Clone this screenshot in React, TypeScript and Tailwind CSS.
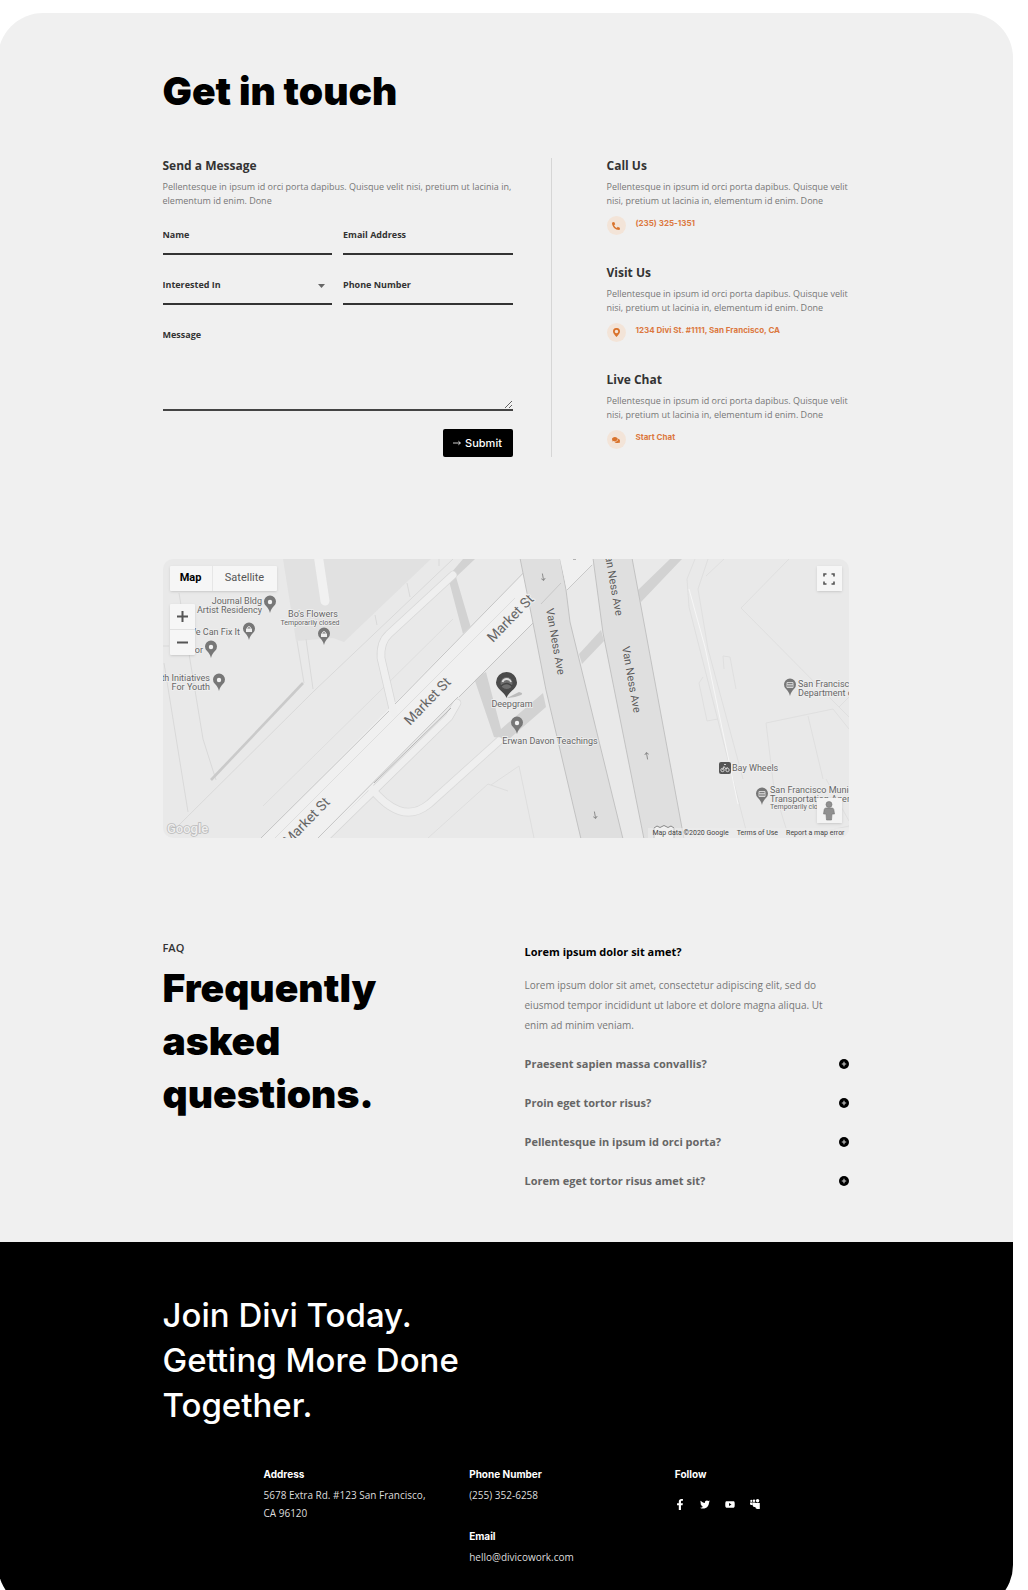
import { useState, type ReactNode } from 'react';
import { FaComments, FaFacebookF, FaPhoneAlt, FaTwitter, FaYoutube } from 'react-icons/fa';

const lorem = 'Pellentesque in ipsum id orci porta dapibus. Quisque velit nisi, pretium ut lacinia in, elementum id enim. Done';

const fieldClass =
  'block h-[30px] w-full rounded-none border-b-2 border-[#333] bg-transparent pb-[9px] text-[9px] leading-3 font-bold text-[#333] outline-none placeholder:text-[#333] placeholder:opacity-100';

function ContactForm() {
  return (
    <form className="max-w-[350px] flex-[350]" onSubmit={(e) => e.preventDefault()}>
      <h2 className="text-[12px] leading-4 font-bold text-[#333]">Send a Message</h2>
      <p className="mt-[6px] text-[9px] leading-[14px] text-[#777]">{lorem}</p>
      <div className="mt-[17px] grid grid-cols-2 gap-x-[11px] gap-y-5">
        <input className={fieldClass} type="text" name="name" placeholder="Name" aria-label="Name" />
        <input className={fieldClass} type="email" name="email" placeholder="Email Address" aria-label="Email Address" />
        <div className="relative">
          <select className={fieldClass + ' appearance-none'} name="interest" aria-label="Interested In" defaultValue="">
            <option value="">Interested In</option>
          </select>
          <svg className="pointer-events-none absolute top-[9px] right-[7px] h-1 w-[7px]" viewBox="0 0 7 4" aria-hidden="true">
            <path d="M0 0h7L3.5 4z" fill="#666" />
          </svg>
        </div>
        <input className={fieldClass} type="tel" name="phone" placeholder="Phone Number" aria-label="Phone Number" />
      </div>
      <textarea
        className="mt-[24px] block h-[82px] w-full resize rounded-none border-b-2 border-[#444] bg-transparent text-[9px] leading-3 font-bold text-[#333] outline-none placeholder:text-[#333] placeholder:opacity-100"
        name="message"
        placeholder="Message"
        aria-label="Message"
      />
      <button
        type="submit"
        className="mt-[18px] ml-auto flex h-7 w-[70px] items-center justify-center gap-1 rounded-[2px] bg-black font-['Inter',sans-serif] text-[11px] font-medium text-white"
      >
        <svg className="h-2 w-2" viewBox="0 0 8 8" fill="none" stroke="#fff" strokeWidth="0.8" aria-hidden="true">
          <path d="M0 4h7.4M5.4 2.2 7.4 4 5.4 5.8" />
        </svg>
        Submit
      </button>
    </form>
  );
}

function MarkerIcon() {
  return (
    <svg className="h-[9px] w-[7px]" viewBox="0 0 7 9" aria-hidden="true">
      <path
        fillRule="evenodd"
        fill="currentColor"
        d="M3.500 0A3.400 3.400 0 0 1 7 3.400C7 5.500 5 7 3.500 9 2 7 0 5.500 0 3.400A3.400 3.400 0 0 1 3.500 0zM3.500 1.700a1.750 1.750 0 1 0 0 3.500 1.750 1.750 0 0 0 0-3.500z"
      />
    </svg>
  );
}

function Contact({ title, icon, link, href }: { title: string; icon: ReactNode; link: string; href: string }) {
  return (
    <section>
      <h2 className="text-[12px] leading-4 font-bold text-[#333]">{title}</h2>
      <p className="mt-[6px] text-[9px] leading-[14px] text-[#777]">{lorem}</p>
      <div className="mt-2 flex gap-[10px]">
        <span className="flex size-[19px] items-center justify-center rounded-full bg-[#f3e4d8] text-[8px] text-[#d9732c]">{icon}</span>
        <a href={href} className="font-['Inter',sans-serif] text-[8px] leading-[15px] font-bold text-[#dc7840]">
          {link}
        </a>
      </div>
    </section>
  );
}

function Pin({ x, y, kind = 'dot' }: { x: number; y: number; kind?: 'dot' | 'bag' | 'hall' }) {
  return (
    <g transform={`translate(${x} ${y})`}>
      <path d="M-4.400 3.500C-2 6-.800 7.500 0 11 .8 7.500 2 6 4.400 3.500A6 6 0 1 0-4.400 3.500z" fill="#777" />
      {kind === 'dot' && <circle r="2.200" fill="#f2f2f2" />}
      {kind === 'bag' && (
        <>
          <path d="M-3-.5h6V3h-6z" fill="#eee" />
          <path d="M-1.600-.5a1.600 2 0 0 1 3.200 0" fill="none" stroke="#eee" strokeWidth=".9" />
        </>
      )}
      {kind === 'hall' && (
        <>
          <path d="M-3-2.500h6v5h-6z" fill="none" stroke="#ddd" strokeWidth=".9" />
          <path d="M-3-.6h6M-1-.6v3M1-.6v3" stroke="#ddd" strokeWidth=".8" />
        </>
      )}
    </g>
  );
}

function Arrow({ x, y, up = false }: { x: number; y: number; up?: boolean }) {
  return (
    <path
      d="M0-3.500v7M-2 1.400 0 3.500 2 1.400"
      transform={`translate(${x} ${y}) rotate(${up ? 170 : -10})`}
      fill="none"
      stroke="#888"
      strokeWidth="0.9"
    />
  );
}

function StreetMap() {
  return (
    <svg className="block h-full w-full" viewBox="0 0 686 279" preserveAspectRatio="xMidYMid slice" role="img" aria-label="Street map">
      <rect width="686" height="279" fill="#e9e9e9" />
      <path d="M120 0H268L181 83 170 79 133 82z" fill="#e1e1e1" />
      <path d="M155-5 162 42" stroke="#f1f1f1" strokeWidth="9" strokeLinecap="round" />
      <g fill="none" stroke="#d9d9d9" strokeWidth="1">
        <path d="M13 269 151 132 290 0M1 104 25 253M16 34 40 180 53 221M134 82 141 124M143 80 150 130M276 0V7M244 24 247 38M212 56 214 66M0 87H6" />
        <path d="M100 247 212 137 290 60M265 279 325 225M328 226 356 207 371 279M325 225 345 232" stroke="#dedede" />
      </g>
      <path d="M48 221 140 124" stroke="#cacaca" strokeWidth="2.600" />
      <g stroke="#dfdfdf" fill="none" strokeWidth="1">
        <path d="M532 0 524 20 526 48 585 279M545 0 535 30 545 90 580 220M561 0 543 17M626 0 578 49 670 142 686 158M561 110 560 97 567 98 573 130M540 118 536 124 544 162 555 160M603 164 670 150 686 170M603 164 611 230 626 279M645 157 660 220M686 138 676 148M663 220 686 262M630 279 686 267" />
        <path d="M526 30 542 88 575 245" stroke="#f6f6f6" />
      </g>
      <path d="M300 0H312L293 18 308 69 300 75 286 22 288 14z" fill="#d2d2d2" />
      <path d="M311 119 323 113 338 170 380 134 383 148 345 181 331 178z" fill="#d2d2d2" />
      <path d="M507 0H519L478 43 473 33zM438 71 441 82 419 105 416 95z" fill="#d2d2d2" />
      <g fill="none" strokeLinejoin="round" strokeLinecap="round">
        <path d="M290 16 226 75Q217 83 218 99L231 155" stroke="#d7d7d7" strokeWidth="8.500" />
        <path d="M208 229C225 250 245 262 266 245L336 182" stroke="#dadada" strokeWidth="8.500" />
        <path d="M294 144 286 158 156 285" stroke="#d7d7d7" strokeWidth="8.500" />
      </g>
      <path d="M93 284 374 0H434L403 31 370 64 295 138 155 283z" fill="#f0f0f0" />
      <g fill="none" strokeLinejoin="round" strokeLinecap="round" stroke="#efefef" strokeWidth="7">
        <path d="M290 16 226 75Q217 83 218 99L231 155" />
        <path d="M208 229C225 250 245 262 266 245L336 182" />
        <path d="M294 144 286 158 156 285" />
      </g>
      <g fill="none" stroke="#c4c4c4" strokeWidth="1">
        <path d="M98 279 226 152M232 145 374 0M155 279 295 138M296 138 370 64" />
        <path d="M112 279 352 39" stroke="#dedede" />
        <path d="M211 224 288 149" stroke="#b5b5b5" />
      </g>
      <path d="M357-1 370 64 383 131 418 280H460L433 170 407 63 403 31 397-1z" fill="#dfdfdf" stroke="#c2c2c2" />
      <path d="M430-1 440 74 481 280H521L469-1z" fill="#dfdfdf" stroke="#c2c2c2" />
      <path d="M397 0H429V6L404 31z" fill="#f0f0f0" />
      <path d="M404 31 429 6M378 45 398 24" stroke="#c8c8c8" strokeWidth="1" />
      <Arrow x={380} y={18} />
      <Arrow x={432} y={256} />
      <Arrow x={484} y={197} up />
      <path d="M410 0h3" stroke="#777" fill="none" />

      <g fontFamily="Roboto, sans-serif" fill="#666">
        <g fontSize="14" fill="#666" stroke="#f0f0f0" strokeWidth="2" paintOrder="stroke">
          <text transform="translate(330 84) rotate(-46)">Market St</text>
          <text transform="translate(247 167) rotate(-46)">Market St</text>
          <text transform="translate(126 287) rotate(-46)">Market St</text>
        </g>
        <g fontSize="11" fill="#5c5c5c" stroke="#e4e4e4" strokeWidth="1" paintOrder="stroke">
          <text transform="translate(383 50) rotate(80)">Van Ness Ave</text>
          <text transform="translate(441 -9) rotate(80)">Van Ness Ave</text>
          <text transform="translate(459 88) rotate(80)">Van Ness Ave</text>
        </g>
        <g fontSize="9" stroke="#f0f0f0" strokeWidth="1.500" paintOrder="stroke">
          <g textAnchor="end">
            <text x="99" y="45">Journal Bldg</text>
            <text x="99" y="54">Artist Residency</text>
            <text x="77" y="76">We Can Fix It</text>
            <text x="40" y="94">or</text>
            <text x="47" y="122">th Initiatives</text>
            <text x="47" y="131">For Youth</text>
          </g>
          <g textAnchor="middle">
            <text x="150" y="58">Bo's Flowers</text>
            <text x="147" y="66" fontSize="7">Temporarily closed</text>
            <text x="349" y="148">Deepgram</text>
            <text x="387" y="185">Erwan Davon Teachings</text>
          </g>
          <text x="635" y="128">San Francisco</text>
          <text x="635" y="137">Department of</text>
          <text x="569" y="212">Bay Wheels</text>
          <text x="607" y="234">San Francisco Municipal</text>
          <text x="607" y="243">Transportation Agency</text>
          <text x="607" y="250" fontSize="7">Temporarily closed</text>
        </g>
      </g>
      <Pin x={107} y={43} />
      <Pin x={86} y={70} kind="bag" />
      <Pin x={48} y={88} />
      <Pin x={56} y={121} />
      <Pin x={161} y={75} kind="bag" />
      <Pin x={354} y={164} />
      <Pin x={627} y={126} kind="hall" />
      <Pin x={599} y={235} kind="hall" />
      <path d="M344 139 356 133Q364 135 352 138z" fill="#bbb" />
      <path d="M343.500 139C342 133 333 130 333 123.500A10.500 10.500 0 0 1 354 123.500C354 130 345 133 343.500 139z" fill="#4a4a4a" />
      <circle cx="343.500" cy="124" r="6" fill="#6e6e6e" />
      <path d="M339.500 123A4.500 4.500 0 0 1 348 123" stroke="#ddd" strokeWidth="1.800" fill="none" />
      <path d="M338 127Q343.500 122 349 127" stroke="#444" strokeWidth="1.500" fill="none" />
      <rect x="556" y="203" width="12" height="12" rx="2" fill="#555" />
      <g fill="none" stroke="#ddd" strokeWidth=".9">
        <circle cx="559.500" cy="211" r="1.700" />
        <circle cx="564.500" cy="211" r="1.700" />
        <path d="M559.500 211 561 207.500 563 210 564.500 208M561 205.500H563" />
      </g>
      <path d="M491 279V269L494 267 497 268.500 501 266.500 505 268.500 508 267 511 269V279" fill="#f2f2f2" stroke="#888" />
      <text x="4" y="274" fontFamily="Roboto, sans-serif" fontSize="13" fontWeight="500" fill="#eee" stroke="#bbb" strokeWidth="1.600" paintOrder="stroke">
        Google
      </text>
    </svg>
  );
}

function MapPanel() {
  const [kind, setKind] = useState('Map');
  return (
    <section className="relative mt-[102px] h-[279px] overflow-hidden rounded-[10px] font-['Roboto',sans-serif]" aria-label="Map">
      <StreetMap />
      <div className="absolute top-[7px] left-[7px] flex h-[25px] rounded-[1px] bg-[#f6f6f6] text-[11px] text-[#555] shadow-sm">
        {['Map', 'Satellite'].map((name) => (
          <button
            key={name}
            type="button"
            onClick={() => setKind(name)}
            className={name === kind ? 'w-[43px] border-r border-[#e6e6e6] font-bold text-black' : 'w-16'}
          >
            {name}
          </button>
        ))}
      </div>
      <div className="absolute top-[45px] left-[7px] flex h-[51px] w-[25px] flex-col divide-y divide-[#e0e0e0] rounded-[1px] bg-[#f6f6f6] shadow-sm">
        {['Zoom in', 'Zoom out'].map((name) => (
          <button key={name} type="button" aria-label={name} className="flex flex-1 items-center justify-center">
            <svg className="size-[11px]" viewBox="0 0 11 11" stroke="#555" strokeWidth="2" aria-hidden="true">
              <path d={name === 'Zoom in' ? 'M0 5.500h11M5.500 0v11' : 'M0 5.500h11'} />
            </svg>
          </button>
        ))}
      </div>
      <button type="button" aria-label="Full screen" className="absolute top-[7px] right-[7px] flex size-[25px] items-center justify-center bg-[#f6f6f6] shadow-sm">
        <svg className="size-3" viewBox="0 0 12 12" fill="none" stroke="#555" strokeWidth="1.600" aria-hidden="true">
          <path d="M1 3.500V1h2.500M8.500 1H11v2.500M11 8.500V11H8.500M3.500 11H1V8.500" />
        </svg>
      </button>
      <button type="button" aria-label="Street view" className="absolute right-[7px] bottom-[15px] flex size-[25px] items-center justify-center bg-[#f3f3f3] shadow-sm">
        <svg className="h-[20px] w-[12px]" viewBox="0 0 12 20" fill="#909090" stroke="#777" strokeWidth=".6" aria-hidden="true">
          <circle cx="6" cy="3.500" r="3" />
          <path d="M3 7h6q1.500 0 1.800 1.500L11.500 13H9l-.5 6h-5L3 13H.5l.7-4.500Q1.500 7 3 7z" />
        </svg>
      </button>
      <div className="absolute right-0 bottom-0 flex gap-2 bg-[#ececec]/60 px-1 text-[7px] leading-[10px] text-[#444]">
        <span>Map data ©2020 Google</span>
        <a href="#terms">Terms of Use</a>
        <a href="#report">Report a map error</a>
      </div>
    </section>
  );
}

const questions = [
  'Praesent sapien massa convallis?',
  'Proin eget tortor risus?',
  'Pellentesque in ipsum id orci porta?',
  'Lorem eget tortor risus amet sit?',
];

function Faq() {
  return (
    <section className="mt-[103px] flex justify-between">
      <div className="w-[280px]">
        <p className="text-[11px] leading-[14px] font-semibold text-[#333]">FAQ</p>
        <h2 className="mt-[6px] font-['Inter',sans-serif] text-[39px] leading-[53px] font-black text-black">
          Frequently asked questions.
        </h2>
      </div>
      <div className="w-[324px] pt-1">
        <button type="button" aria-expanded="true" className="block text-left text-[11px] leading-[14px] font-bold text-black">
          Lorem ipsum dolor sit amet?
        </button>
        <p className="mt-4 text-[10px] leading-5 text-[#777]">
          Lorem ipsum dolor sit amet, consectetur adipiscing elit, sed do eiusmod tempor incididunt ut labore et dolore magna
          aliqua. Ut enim ad minim veniam.
        </p>
        <div className="mt-[22px] flex flex-col gap-[25px]">
          {questions.map((q) => (
            <button key={q} type="button" aria-expanded="false" className="flex items-center justify-between text-left text-[11px] leading-[14px] font-bold text-[#666]">
              {q}
              <svg className="size-[10px]" viewBox="0 0 10 10" aria-hidden="true">
                <circle cx="5" cy="5" r="5" fill="#000" />
                <path d="M2.800 5h4.400M5 2.800v4.400" stroke="#ccc" strokeWidth="1.100" />
              </svg>
            </button>
          ))}
        </div>
      </div>
    </section>
  );
}

function MyspaceIcon() {
  return (
    <svg className="size-[10px]" viewBox="0 0 10 10" fill="currentColor" aria-hidden="true">
      <circle cx="1.300" cy="1.900" r="1.100" />
      <circle cx="4" cy="1.700" r="1.300" />
      <circle cx="7.600" cy="1.700" r="1.700" />
      <path d="M0 3.500h2.400V6H1.300Q0 6 0 4.700zM2.600 3.500h2.700V8H4.300Q2.600 8 2.600 6zM5.300 3.900h4.500V10H7Q5.300 9.500 5.300 8z" />
    </svg>
  );
}

const social = [
  { name: 'Facebook', icon: <FaFacebookF /> },
  { name: 'Twitter', icon: <FaTwitter /> },
  { name: 'YouTube', icon: <FaYoutube /> },
  { name: 'Myspace', icon: <MyspaceIcon /> },
];

function FooterItem({ title, children }: { title: string; children: ReactNode }) {
  return (
    <div>
      <h3 className="font-['Inter',sans-serif] text-[10px] leading-[14px] font-bold text-white">{title}</h3>
      <div className="mt-[5px] text-[10px] leading-[18px] text-[#ddd]">{children}</div>
    </div>
  );
}

function Footer() {
  return (
    <footer className="mt-[54px] bg-black pt-[51px] pb-[44px]">
      <div className="mx-auto max-w-[686px]">
        <h2 className="max-w-[340px] font-['Inter',sans-serif] text-[33px] leading-[45px] font-medium text-white">
          Join Divi Today. Getting More Done Together.
        </h2>
        <div className="mt-[39px] ml-[101px] grid grid-cols-3 gap-x-8">
          <FooterItem title="Address">
            5678 Extra Rd. #123 San Francisco,
            <br />
            CA 96120
          </FooterItem>
          <div className="flex flex-col gap-[25px]">
            <FooterItem title="Phone Number">(255) 352-6258</FooterItem>
            <FooterItem title="Email">
              <a href="mailto:hello@divicowork.com">hello@divicowork.com</a>
            </FooterItem>
          </div>
          <FooterItem title="Follow">
            <div className="flex gap-[15px] pt-[13px] text-[11px] text-white">
              {social.map((s) => (
                <a key={s.name} href={'#' + s.name.toLowerCase()} aria-label={s.name} className="flex size-[10px] shrink-0 items-center justify-center">
                  {s.icon}
                </a>
              ))}
            </div>
          </FooterItem>
        </div>
      </div>
    </footer>
  );
}

export default function App() {
  return (
    <div className="overflow-hidden bg-white pt-[13px] font-['Open_Sans',sans-serif]">
      <div className="mr-[15px] -mb-5 -ml-[2px] overflow-hidden rounded-[45px] bg-[#f0f0f0]">
        <main className="mx-auto max-w-[686px] pt-[51px]">
          <h1 className="font-['Inter',sans-serif] text-[39px] leading-[53px] font-black text-black">Get in touch</h1>
          <div className="mt-[41px] flex">
            <ContactForm />
            <div className="ml-[38px] w-px shrink-0 bg-[#d6d6d6]" />
            <div className="ml-[55px] flex flex-[242] flex-col gap-[30px]">
              <Contact title="Call Us" icon={<FaPhoneAlt />} link="(235) 325-1351" href="tel:2353251351" />
              <Contact title="Visit Us" icon={<MarkerIcon />} link="1234 Divi St. #1111, San Francisco, CA" href="#visit" />
              <Contact title="Live Chat" icon={<FaComments />} link="Start Chat" href="#chat" />
            </div>
          </div>
          <MapPanel />
          <Faq />
        </main>
        <Footer />
      </div>
    </div>
  );
}
